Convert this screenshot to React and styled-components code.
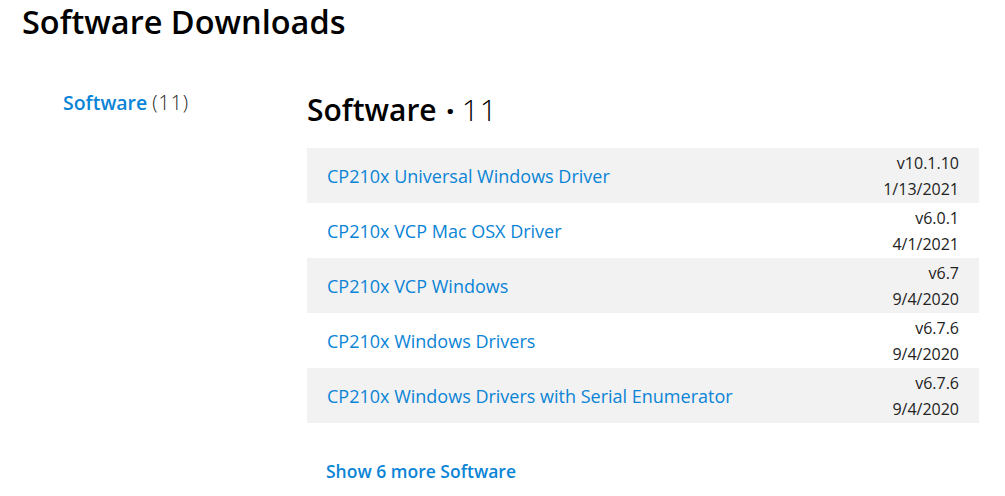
import React from "react";
import styled, { createGlobalStyle } from "styled-components";

const software = [
  { name: "CP210x Universal Windows Driver", version: "v10.1.10", date: "1/13/2021" },
  { name: "CP210x VCP Mac OSX Driver", version: "v6.0.1", date: "4/1/2021" },
  { name: "CP210x VCP Windows", version: "v6.7", date: "9/4/2020" },
  { name: "CP210x Windows Drivers", version: "v6.7.6", date: "9/4/2020" },
  { name: "CP210x Windows Drivers with Serial Enumerator", version: "v6.7.6", date: "9/4/2020" },
];

const GlobalStyle = createGlobalStyle`
  body {
    margin: 0;
    background: #ffffff;
    font-family: "Open Sans", "Noto Sans", sans-serif;
    color: #000;
  }
`;

export default function App() {
  return (
    <>
      <GlobalStyle />
      <Page>
        <Title>Software Downloads</Title>
        <Body>
          <Sidebar>
            <FilterLink href="#">Software</FilterLink>
            <Count>(11)</Count>
          </Sidebar>
          <Main>
            <SectionTitle>
              Software <Dot>·</Dot> <Light>11</Light>
            </SectionTitle>
            <List>
              {software.map((item, i) => (
                <Row key={item.name} $shaded={i % 2 === 0}>
                  <Name href="#">{item.name}</Name>
                  <Meta>
                    <span>{item.version}</span>
                    <span>{item.date}</span>
                  </Meta>
                </Row>
              ))}
            </List>
            <More href="#">Show 6 more Software</More>
          </Main>
        </Body>
      </Page>
    </>
  );
}

const Page = styled.div`
  padding: 0 26px 0 22px;
`;

const Title = styled.h1`
  margin: 0;
  padding-top: 2px;
  font-size: 32.5px;
  line-height: 40px;
  font-weight: 600;
  color: #000;
`;

const Body = styled.div`
  display: grid;
  grid-template-columns: 285px 1fr;
  margin-top: 49px;
`;

const Sidebar = styled.div`
  padding-left: 41px;
  font-size: 19.5px;
  line-height: 24px;
`;

const FilterLink = styled.a`
  color: #0a84d6;
  font-weight: 600;
  text-decoration: none;
`;

const Count = styled.span`
  margin-left: 5px;
  font-weight: 300;
  letter-spacing: 1px;
  color: #222;
`;

const Main = styled.div`
  display: flex;
  flex-direction: column;
`;

const SectionTitle = styled.h2`
  margin: 0;
  font-size: 30px;
  line-height: 38px;
  font-weight: 600;
  color: #000;
`;

const Dot = styled.span`
  font-weight: 800;
  font-size: 26px;
  margin-left: 2px;
`;

const Light = styled.span`
  font-weight: 300;
  letter-spacing: 1px;
`;

const List = styled.div`
  margin-top: 18px;
  display: flex;
  flex-direction: column;
`;

const Row = styled.div`
  display: flex;
  align-items: center;
  justify-content: space-between;
  height: 55px;
  padding: 0 20px;
  background: ${(p) => (p.$shaded ? "#f2f2f2" : "transparent")};
`;

const Name = styled.a`
  color: #0a84d6;
  font-size: 18px;
  font-weight: 500;
  text-decoration: none;
`;

const Meta = styled.div`
  display: flex;
  flex-direction: column;
  align-items: flex-end;
  font-size: 16px;
  line-height: 26px;
  color: #222;
`;

const More = styled.a`
  margin-top: 36px;
  padding-left: 19px;
  color: #0a84d6;
  font-size: 17.5px;
  font-weight: 600;
  text-decoration: none;
`;
